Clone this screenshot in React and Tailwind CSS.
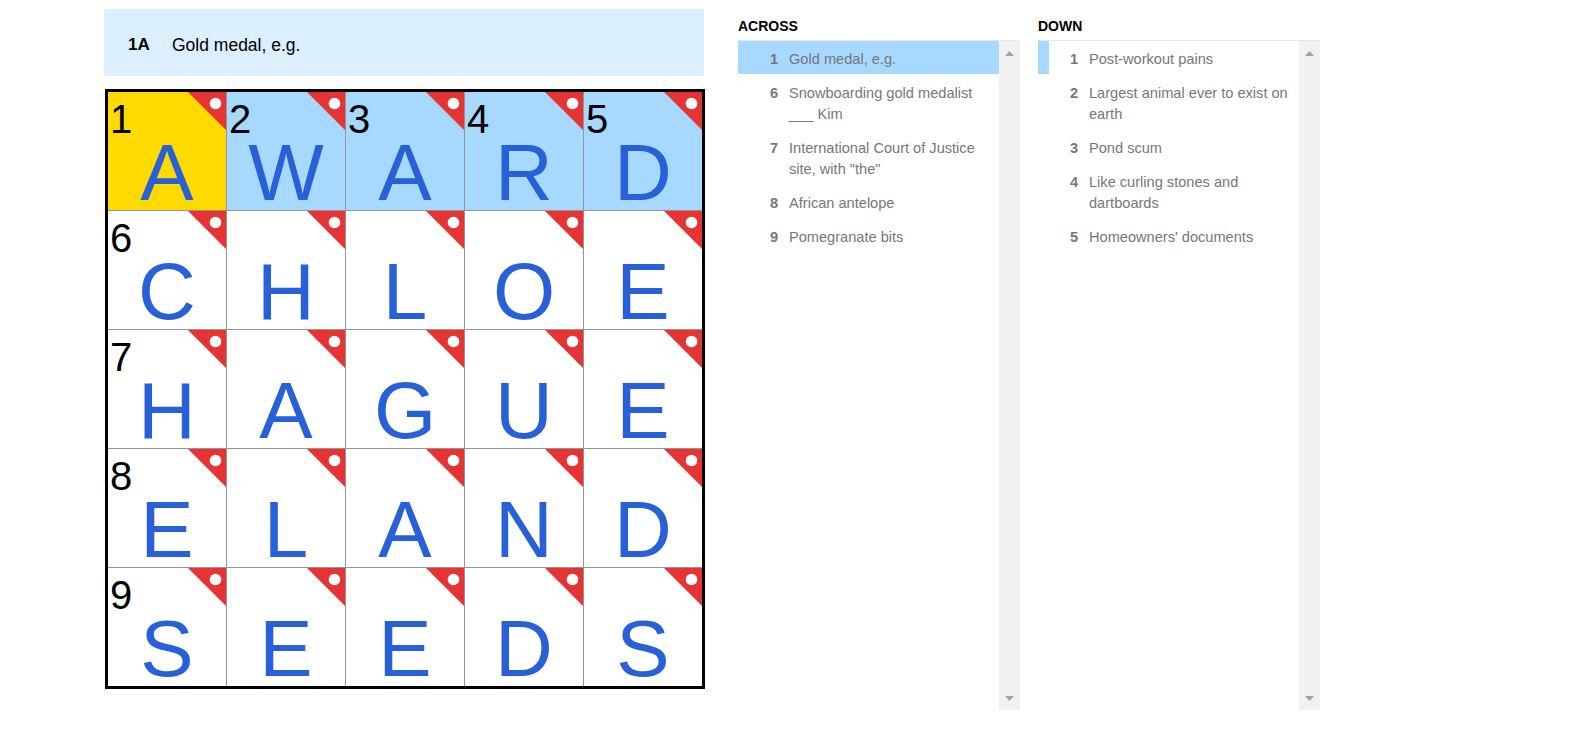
import React from 'react';

const grid = [
  ['A', 'W', 'A', 'R', 'D'],
  ['C', 'H', 'L', 'O', 'E'],
  ['H', 'A', 'G', 'U', 'E'],
  ['E', 'L', 'A', 'N', 'D'],
  ['S', 'E', 'E', 'D', 'S'],
];

const numbers = {
  '0-0': 1, '0-1': 2, '0-2': 3, '0-3': 4, '0-4': 5,
  '1-0': 6, '2-0': 7, '3-0': 8, '4-0': 9,
};

const across = [
  { num: 1, text: 'Gold medal, e.g.' },
  { num: 6, text: 'Snowboarding gold medalist ___ Kim' },
  { num: 7, text: 'International Court of Justice site, with "the"' },
  { num: 8, text: 'African antelope' },
  { num: 9, text: 'Pomegranate bits' },
];

const down = [
  { num: 1, text: 'Post-workout pains' },
  { num: 2, text: 'Largest animal ever to exist on earth' },
  { num: 3, text: 'Pond scum' },
  { num: 4, text: 'Like curling stones and dartboards' },
  { num: 5, text: "Homeowners' documents" },
];

const Flag = () => (
  <svg className="absolute top-0 right-0" width="38" height="38" viewBox="0 0 38 38">
    <polygon points="0,0 38,0 38,38" fill="#e63333" />
    <circle cx="27.5" cy="11.5" r="5.8" fill="#ffffff" />
  </svg>
);

const Cell = ({ letter, row, col }) => {
  const num = numbers[`${row}-${col}`];
  let bg = 'bg-white';
  if (row === 0 && col === 0) bg = 'bg-[#ffda00]';
  else if (row === 0) bg = 'bg-[#a7d8ff]';

  return (
    <div className={`relative ${bg}`}>
      {num && (
        <span className="absolute top-[7px] left-[2px] text-[40px] leading-[40px] text-black">
          {num}
        </span>
      )}
      <span className="absolute top-[47px] left-0 right-0 text-center text-[80px] leading-[68px] text-[#2860d8]">
        {letter}
      </span>
      <Flag />
    </div>
  );
};

const ScrollTrack = () => (
  <div className="w-[21px] h-full bg-[#f1f1f1] flex flex-col items-center justify-between pt-[10px] pb-[9px]">
    <svg width="9" height="5" viewBox="0 0 9 5">
      <polygon points="4.5,0 9,5 0,5" fill="#a3a3a3" />
    </svg>
    <svg width="9" height="5" viewBox="0 0 9 5">
      <polygon points="0,0 9,0 4.5,5" fill="#a3a3a3" />
    </svg>
  </div>
);

const ClueList = ({ title, clues, highlight }) => (
  <div className="w-[282px]">
    <h3 className="text-[14px] leading-[16px] font-bold text-black uppercase mb-[6px]">{title}</h3>
    <div className="h-[670px] border-t border-[#e6e6e6] flex">
      <ol className="flex-1">
        {clues.map((clue) => {
          let rowCls = 'border-transparent';
          if (clue.num === 1 && highlight === 'fill') rowCls = 'border-[#a7d8ff] bg-[#a7d8ff]';
          if (clue.num === 1 && highlight === 'bar') rowCls = 'border-[#a7d8ff]';
          return (
            <li
              key={clue.num}
              className={`flex border-l-[11px] pl-[5px] pr-[4px] pt-[8px] pb-[4px] mb-px text-[14.6px] leading-[21px] text-[#777] ${rowCls}`}
            >
              <span className="w-[24px] shrink-0 text-right font-bold">{clue.num}</span>
              <span className="ml-[11px]">{clue.text}</span>
            </li>
          );
        })}
      </ol>
      <ScrollTrack />
    </div>
  </div>
);

export default function App() {
  return (
    <div
      className="w-[1592px] h-[750px] bg-white flex pl-[104px] pt-[9px]"
      style={{ fontFamily: '"Liberation Sans", Arial, sans-serif' }}
    >
      {/* Puzzle */}
      <div className="w-[601px]">
        <div className="w-[600px] h-[67px] bg-[#dcefff] flex items-center pl-[24px] pt-[5px]">
          <span className="w-[44px] text-[17px] font-bold text-black">1A</span>
          <span className="text-[17.5px] text-black">Gold medal, e.g.</span>
        </div>
        <div className="mt-[13px] ml-px w-[600px] h-[600px] border-[3px] border-black bg-[#959595] grid grid-cols-5 grid-rows-5 gap-px">
          {grid.map((row, r) =>
            row.map((letter, c) => <Cell key={`${r}-${c}`} letter={letter} row={r} col={c} />)
          )}
        </div>
      </div>

      {/* Clues */}
      <div className="ml-[33px] pt-[9px] flex gap-[18px]">
        <ClueList title="Across" clues={across} highlight="fill" />
        <ClueList title="Down" clues={down} highlight="bar" />
      </div>
    </div>
  );
}
